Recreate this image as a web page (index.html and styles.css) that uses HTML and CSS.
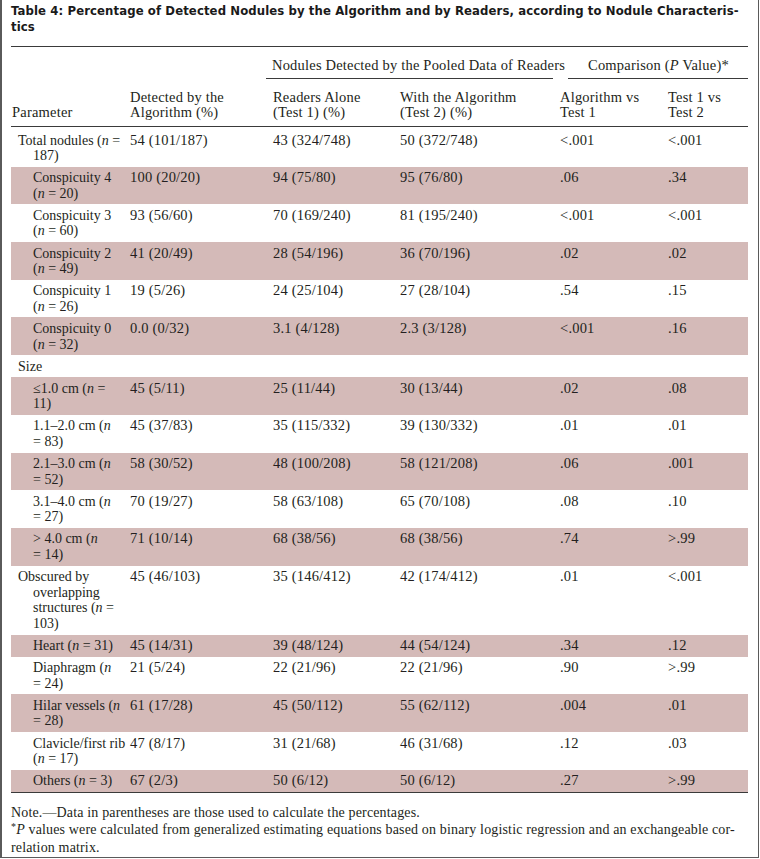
FILE: index.html
```html
<!DOCTYPE html>
<html lang="en">
<head>
<meta charset="utf-8">
<title>Table 4</title>
<link rel="stylesheet" href="styles.css">
</head>
<body>
<div class="frame">
  <h1 class="title">Table 4: Percentage of Detected Nodules by the Algorithm and by Readers, according to Nodule Characteris-<br>tics</h1>
  <table class="data">
    <colgroup>
      <col class="c1"><col class="c2"><col class="c3"><col class="c4"><col class="c5"><col class="c6">
    </colgroup>
    <thead>
      <tr class="group">
        <th></th>
        <th></th>
        <th colspan="2"><div class="span span-a">Nodules Detected by the Pooled Data of Readers</div></th>
        <th colspan="2"><div class="span span-b">Comparison (<i>P</i> Value)*</div></th>
      </tr>
      <tr class="cols">
        <th class="param">Parameter</th>
        <th>Detected by the<br>Algorithm (%)</th>
        <th>Readers Alone<br>(Test 1) (%)</th>
        <th>With the Algorithm<br>(Test 2) (%)</th>
        <th>Algorithm vs<br>Test 1</th>
        <th>Test 1 vs<br>Test 2</th>
      </tr>
    </thead>
    <tbody>
      <tr><td class="lvl1">Total nodules (<i>n</i> =<br>187)</td><td>54 (101/187)</td><td>43 (324/748)</td><td>50 (372/748)</td><td>&lt;.001</td><td>&lt;.001</td></tr>
      <tr><td class="lvl2">Conspicuity 4<br>(<i>n</i> = 20)</td><td>100 (20/20)</td><td>94 (75/80)</td><td>95 (76/80)</td><td>.06</td><td>.34</td></tr>
      <tr><td class="lvl2">Conspicuity 3<br>(<i>n</i> = 60)</td><td>93 (56/60)</td><td>70 (169/240)</td><td>81 (195/240)</td><td>&lt;.001</td><td>&lt;.001</td></tr>
      <tr><td class="lvl2">Conspicuity 2<br>(<i>n</i> = 49)</td><td>41 (20/49)</td><td>28 (54/196)</td><td>36 (70/196)</td><td>.02</td><td>.02</td></tr>
      <tr><td class="lvl2">Conspicuity 1<br>(<i>n</i> = 26)</td><td>19 (5/26)</td><td>24 (25/104)</td><td>27 (28/104)</td><td>.54</td><td>.15</td></tr>
      <tr><td class="lvl2">Conspicuity 0<br>(<i>n</i> = 32)</td><td>0.0 (0/32)</td><td>3.1 (4/128)</td><td>2.3 (3/128)</td><td>&lt;.001</td><td>.16</td></tr>
      <tr class="heading"><td class="lvl1">Size</td><td></td><td></td><td></td><td></td><td></td></tr>
      <tr><td class="lvl2">≤1.0 cm (<i>n</i> =<br>11)</td><td>45 (5/11)</td><td>25 (11/44)</td><td>30 (13/44)</td><td>.02</td><td>.08</td></tr>
      <tr><td class="lvl2">1.1–2.0 cm (<i>n</i><br>= 83)</td><td>45 (37/83)</td><td>35 (115/332)</td><td>39 (130/332)</td><td>.01</td><td>.01</td></tr>
      <tr><td class="lvl2">2.1–3.0 cm (<i>n</i><br>= 52)</td><td>58 (30/52)</td><td>48 (100/208)</td><td>58 (121/208)</td><td>.06</td><td>.001</td></tr>
      <tr><td class="lvl2">3.1–4.0 cm (<i>n</i><br>= 27)</td><td>70 (19/27)</td><td>58 (63/108)</td><td>65 (70/108)</td><td>.08</td><td>.10</td></tr>
      <tr><td class="lvl2">&gt; 4.0 cm (<i>n</i><br>= 14)</td><td>71 (10/14)</td><td>68 (38/56)</td><td>68 (38/56)</td><td>.74</td><td>&gt;.99</td></tr>
      <tr><td class="lvl1">Obscured by<br>overlapping<br>structures (<i>n</i> =<br>103)</td><td>45 (46/103)</td><td>35 (146/412)</td><td>42 (174/412)</td><td>.01</td><td>&lt;.001</td></tr>
      <tr><td class="lvl2">Heart (<i>n</i> = 31)</td><td>45 (14/31)</td><td>39 (48/124)</td><td>44 (54/124)</td><td>.34</td><td>.12</td></tr>
      <tr><td class="lvl2">Diaphragm (<i>n</i><br>= 24)</td><td>21 (5/24)</td><td>22 (21/96)</td><td>22 (21/96)</td><td>.90</td><td>&gt;.99</td></tr>
      <tr><td class="lvl2">Hilar vessels (<i>n</i><br>= 28)</td><td>61 (17/28)</td><td>45 (50/112)</td><td>55 (62/112)</td><td>.004</td><td>.01</td></tr>
      <tr><td class="lvl2">Clavicle/first rib<br>(<i>n</i> = 17)</td><td>47 (8/17)</td><td>31 (21/68)</td><td>46 (31/68)</td><td>.12</td><td>.03</td></tr>
      <tr><td class="lvl2">Others (<i>n</i> = 3)</td><td>67 (2/3)</td><td>50 (6/12)</td><td>50 (6/12)</td><td>.27</td><td>&gt;.99</td></tr>
    </tbody>
  </table>
  <div class="notes">
    <p>Note.—Data in parentheses are those used to calculate the percentages.</p>
    <p><sup>*</sup><i>P</i> values were calculated from generalized estimating equations based on binary logistic regression and an exchangeable cor-<br>relation matrix.</p>
  </div>
</div>
</body>
</html>
```

FILE: styles.css
```css
html, body {
  margin: 0;
  padding: 0;
  background: #ffffff;
}

.frame {
  box-sizing: border-box;
  width: 759px;
  height: 858px;
  border-left: 2px solid #5a5a5a;
  border-right: 1px solid #5a5a5a;
  border-bottom: 1px solid #5a5a5a;
  padding: 3px 9px 0 9px;
  color: #231f20;
  font-family: "Liberation Serif", "Times New Roman", serif;
  font-size: 14.5px;
  letter-spacing: 0.2px;
  overflow: hidden;
}

.title {
  margin: 0 0 11px 0;
  font-family: "DejaVu Sans", Lato, sans-serif;
  font-weight: bold;
  font-size: 11.7px;
  line-height: 16px;
  letter-spacing: 0.1px;
  white-space: nowrap;
  color: #1a1a1a;
}

.data {
  width: 737px;
  border-collapse: collapse;
  table-layout: fixed;
  border-top: 1.5px solid #3a3a3a;
  border-bottom: 1.5px solid #3a3a3a;
  line-height: 15.5px;
}

.data tbody {
  line-height: 15.6px;
}

.c1 { width: 112px; }
.c2 { width: 143px; }
.c3 { width: 127px; }
.c4 { width: 160px; }
.c5 { width: 108px; }
.c6 { width: 87px; }

.data th {
  font-weight: normal;
  text-align: left;
  vertical-align: bottom;
  white-space: nowrap;
}

.group th {
  padding: 11px 0 0 0;
}

.span {
  border-bottom: 1.5px solid #3a3a3a;
  padding: 0 0 4px 6px;
}

.span-b {
  margin-left: 15px;
  padding-left: 20px;
}

.cols th {
  padding: 11px 0 5px 7px;
  border-bottom: 1.5px solid #3a3a3a;
}

.cols th.param {
  padding-left: 1px;
}

.data td {
  padding: 3.5px 0 3px 7px;
  vertical-align: top;
  white-space: nowrap;
}

.data tbody tr:first-child td {
  padding-top: 6px;
}

.data td.lvl1,
.data td.lvl2 {
  padding-left: 22px;
  font-size: 14px;
  letter-spacing: 0;
}

.data td.lvl1 {
  text-indent: -15px;
}

.data tbody tr:nth-child(even) {
  background: #d4bab8;
}

.notes {
  padding-top: 11px;
  line-height: 17.5px;
  font-size: 14px;
  letter-spacing: 0.15px;
}

.notes p {
  margin: 0;
}

.notes sup {
  font-size: 10px;
  line-height: 0;
  vertical-align: 4px;
}
```
